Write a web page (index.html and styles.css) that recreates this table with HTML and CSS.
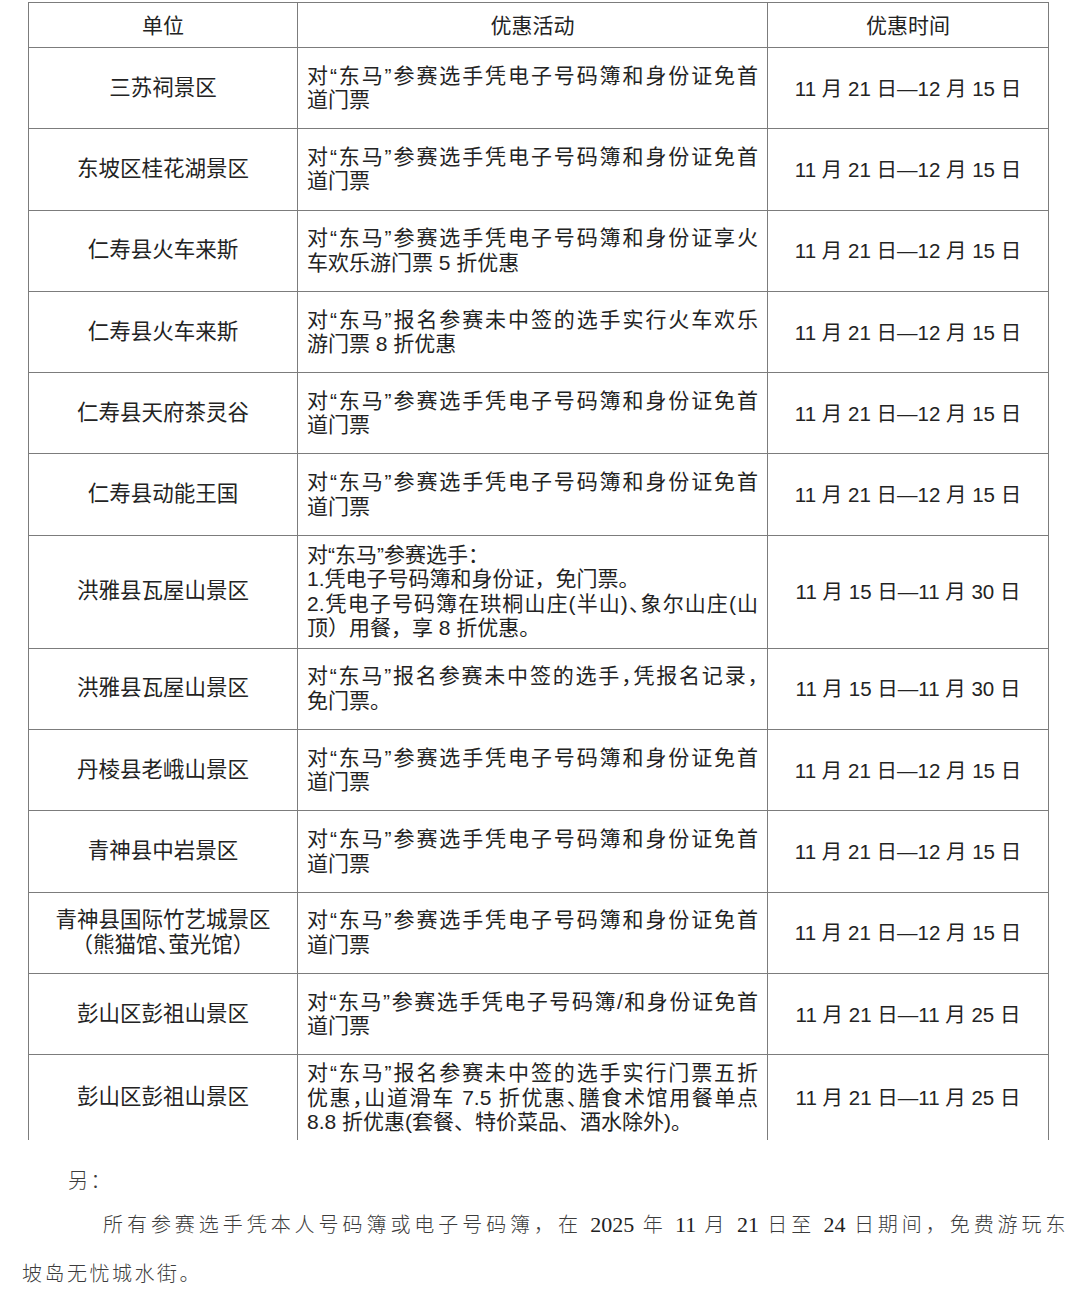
FILE: index.html
```html
<!DOCTYPE html>
<html lang="zh-CN">
<head>
<meta charset="utf-8">
<title>优惠活动</title>
<link rel="stylesheet" href="styles.css">
</head>
<body>
<div class="page">
  <table class="offers">
    <colgroup>
      <col class="c-unit">
      <col class="c-act">
      <col class="c-time">
    </colgroup>
    <thead>
      <tr class="head">
        <th>单位</th>
        <th>优惠活动</th>
        <th>优惠时间</th>
      </tr>
    </thead>
    <tbody>
      <tr>
        <td class="unit">三苏祠景区</td>
        <td class="act"><span class="ln">对“东马”参赛选手凭电子号码簿和身份证免首</span>道门票</td>
        <td class="time">11 月 21 日—12 月 15 日</td>
      </tr>
      <tr>
        <td class="unit">东坡区桂花湖景区</td>
        <td class="act"><span class="ln">对“东马”参赛选手凭电子号码簿和身份证免首</span>道门票</td>
        <td class="time">11 月 21 日—12 月 15 日</td>
      </tr>
      <tr>
        <td class="unit">仁寿县火车来斯</td>
        <td class="act"><span class="ln">对“东马”参赛选手凭电子号码簿和身份证享火</span>车欢乐游门票 5 折优惠</td>
        <td class="time">11 月 21 日—12 月 15 日</td>
      </tr>
      <tr>
        <td class="unit">仁寿县火车来斯</td>
        <td class="act"><span class="ln">对“东马”报名参赛未中签的选手实行火车欢乐</span>游门票 8 折优惠</td>
        <td class="time">11 月 21 日—12 月 15 日</td>
      </tr>
      <tr>
        <td class="unit">仁寿县天府茶灵谷</td>
        <td class="act"><span class="ln">对“东马”参赛选手凭电子号码簿和身份证免首</span>道门票</td>
        <td class="time">11 月 21 日—12 月 15 日</td>
      </tr>
      <tr>
        <td class="unit">仁寿县动能王国</td>
        <td class="act"><span class="ln">对“东马”参赛选手凭电子号码簿和身份证免首</span>道门票</td>
        <td class="time">11 月 21 日—12 月 15 日</td>
      </tr>
      <tr class="tall">
        <td class="unit">洪雅县瓦屋山景区</td>
        <td class="act"><span class="ln-plain">对“东马”参赛选手：</span><span class="ln-plain">1.凭电子号码簿和身份证，免门票。</span><span class="ln">2.凭电子号码簿在珙桐山庄(半山)、象尔山庄(山</span>顶）用餐，享 8 折优惠。</td>
        <td class="time">11 月 15 日—11 月 30 日</td>
      </tr>
      <tr>
        <td class="unit">洪雅县瓦屋山景区</td>
        <td class="act"><span class="ln">对“东马”报名参赛未中签的选手，凭报名记录，</span>免门票。</td>
        <td class="time">11 月 15 日—11 月 30 日</td>
      </tr>
      <tr>
        <td class="unit">丹棱县老峨山景区</td>
        <td class="act"><span class="ln">对“东马”参赛选手凭电子号码簿和身份证免首</span>道门票</td>
        <td class="time">11 月 21 日—12 月 15 日</td>
      </tr>
      <tr>
        <td class="unit">青神县中岩景区</td>
        <td class="act"><span class="ln">对“东马”参赛选手凭电子号码簿和身份证免首</span>道门票</td>
        <td class="time">11 月 21 日—12 月 15 日</td>
      </tr>
      <tr>
        <td class="unit">青神县国际竹艺城景区<br>（熊猫馆、萤光馆）</td>
        <td class="act"><span class="ln">对“东马”参赛选手凭电子号码簿和身份证免首</span>道门票</td>
        <td class="time">11 月 21 日—12 月 15 日</td>
      </tr>
      <tr>
        <td class="unit">彭山区彭祖山景区</td>
        <td class="act"><span class="ln">对“东马”参赛选手凭电子号码簿/和身份证免首</span>道门票</td>
        <td class="time">11 月 21 日—11 月 25 日</td>
      </tr>
      <tr class="last">
        <td class="unit">彭山区彭祖山景区</td>
        <td class="act"><span class="ln">对“东马”报名参赛未中签的选手实行门票五折</span><span class="ln">优惠，山道滑车 7.5 折优惠、膳食术馆用餐单点</span>8.8 折优惠(套餐、特价菜品、酒水除外)。</td>
        <td class="time">11 月 21 日—11 月 25 日</td>
      </tr>
    </tbody>
  </table>

  <div class="note">
    <p class="note-title">另：</p>
    <p class="note-body"><span class="line-full">所有参赛选手凭本人号码簿或电子号码簿，在 <span class="num">2025</span> 年 <span class="num">11</span> 月 <span class="num">21</span> 日至 <span class="num">24</span> 日期间，免费游玩东</span><span class="line-end">坡岛无忧城水街。</span></p>
  </div>
</div>
</body>
</html>
```

FILE: styles.css
```css
html, body {
  margin: 0;
  padding: 0;
  background: #ffffff;
}

.page {
  width: 1080px;
  height: 1308px;
  overflow: hidden;
  padding-top: 2px;
  box-sizing: border-box;
}

.offers {
  margin-left: 28px;
  width: 1020px;
  border-collapse: collapse;
  table-layout: fixed;
  font-family: "Liberation Sans", "Noto Sans CJK SC", sans-serif;
  font-size: 21.5px;
  color: #232323;
  font-feature-settings: "halt";
}

.c-unit { width: 269px; }
.c-act { width: 470px; }
.c-time { width: 281px; }

.offers th,
.offers td {
  border: 1.5px solid #7c7c7c;
  padding: 0;
  vertical-align: middle;
  line-height: 25px;
}

.offers th {
  height: 44px;
  font-size: 21px;
  font-weight: normal;
  text-align: center;
}

.offers td {
  height: 80.3px;
}

.offers tr.tall td {
  height: 112px;
}

.offers tr.last td {
  height: 85px;
  border-bottom: none;
}

.unit {
  text-align: center;
}

.offers td.act {
  padding: 0 9px;
  font-size: 21px;
  line-height: 24.5px;
  text-align: left;
  font-feature-settings: normal;
}

.ln {
  display: block;
  text-align: justify;
  text-align-last: justify;
  font-feature-settings: "halt";
}

.ln-plain {
  display: block;
}

.offers td.time {
  text-align: center;
  font-size: 20.5px;
  font-feature-settings: normal;
}

.note {
  margin-top: 20px;
  font-family: "Noto Sans CJK SC", "Noto Sans", sans-serif;
  font-weight: 300;
  color: #3c3c3c;
  font-size: 20px;
  letter-spacing: 2.5px;
}

.note-title {
  margin: 0 0 0 68px;
  line-height: 40px;
}

.note-body {
  margin: 0 12px 0 22px;
  line-height: 48px;
}

.line-full {
  display: block;
  text-indent: 81px;
  text-align: justify;
  text-align-last: justify;
}

.line-end {
  display: block;
}

.num {
  font-family: "Liberation Serif", serif;
  font-size: 22px;
  letter-spacing: 0;
  color: #222;
}
```
